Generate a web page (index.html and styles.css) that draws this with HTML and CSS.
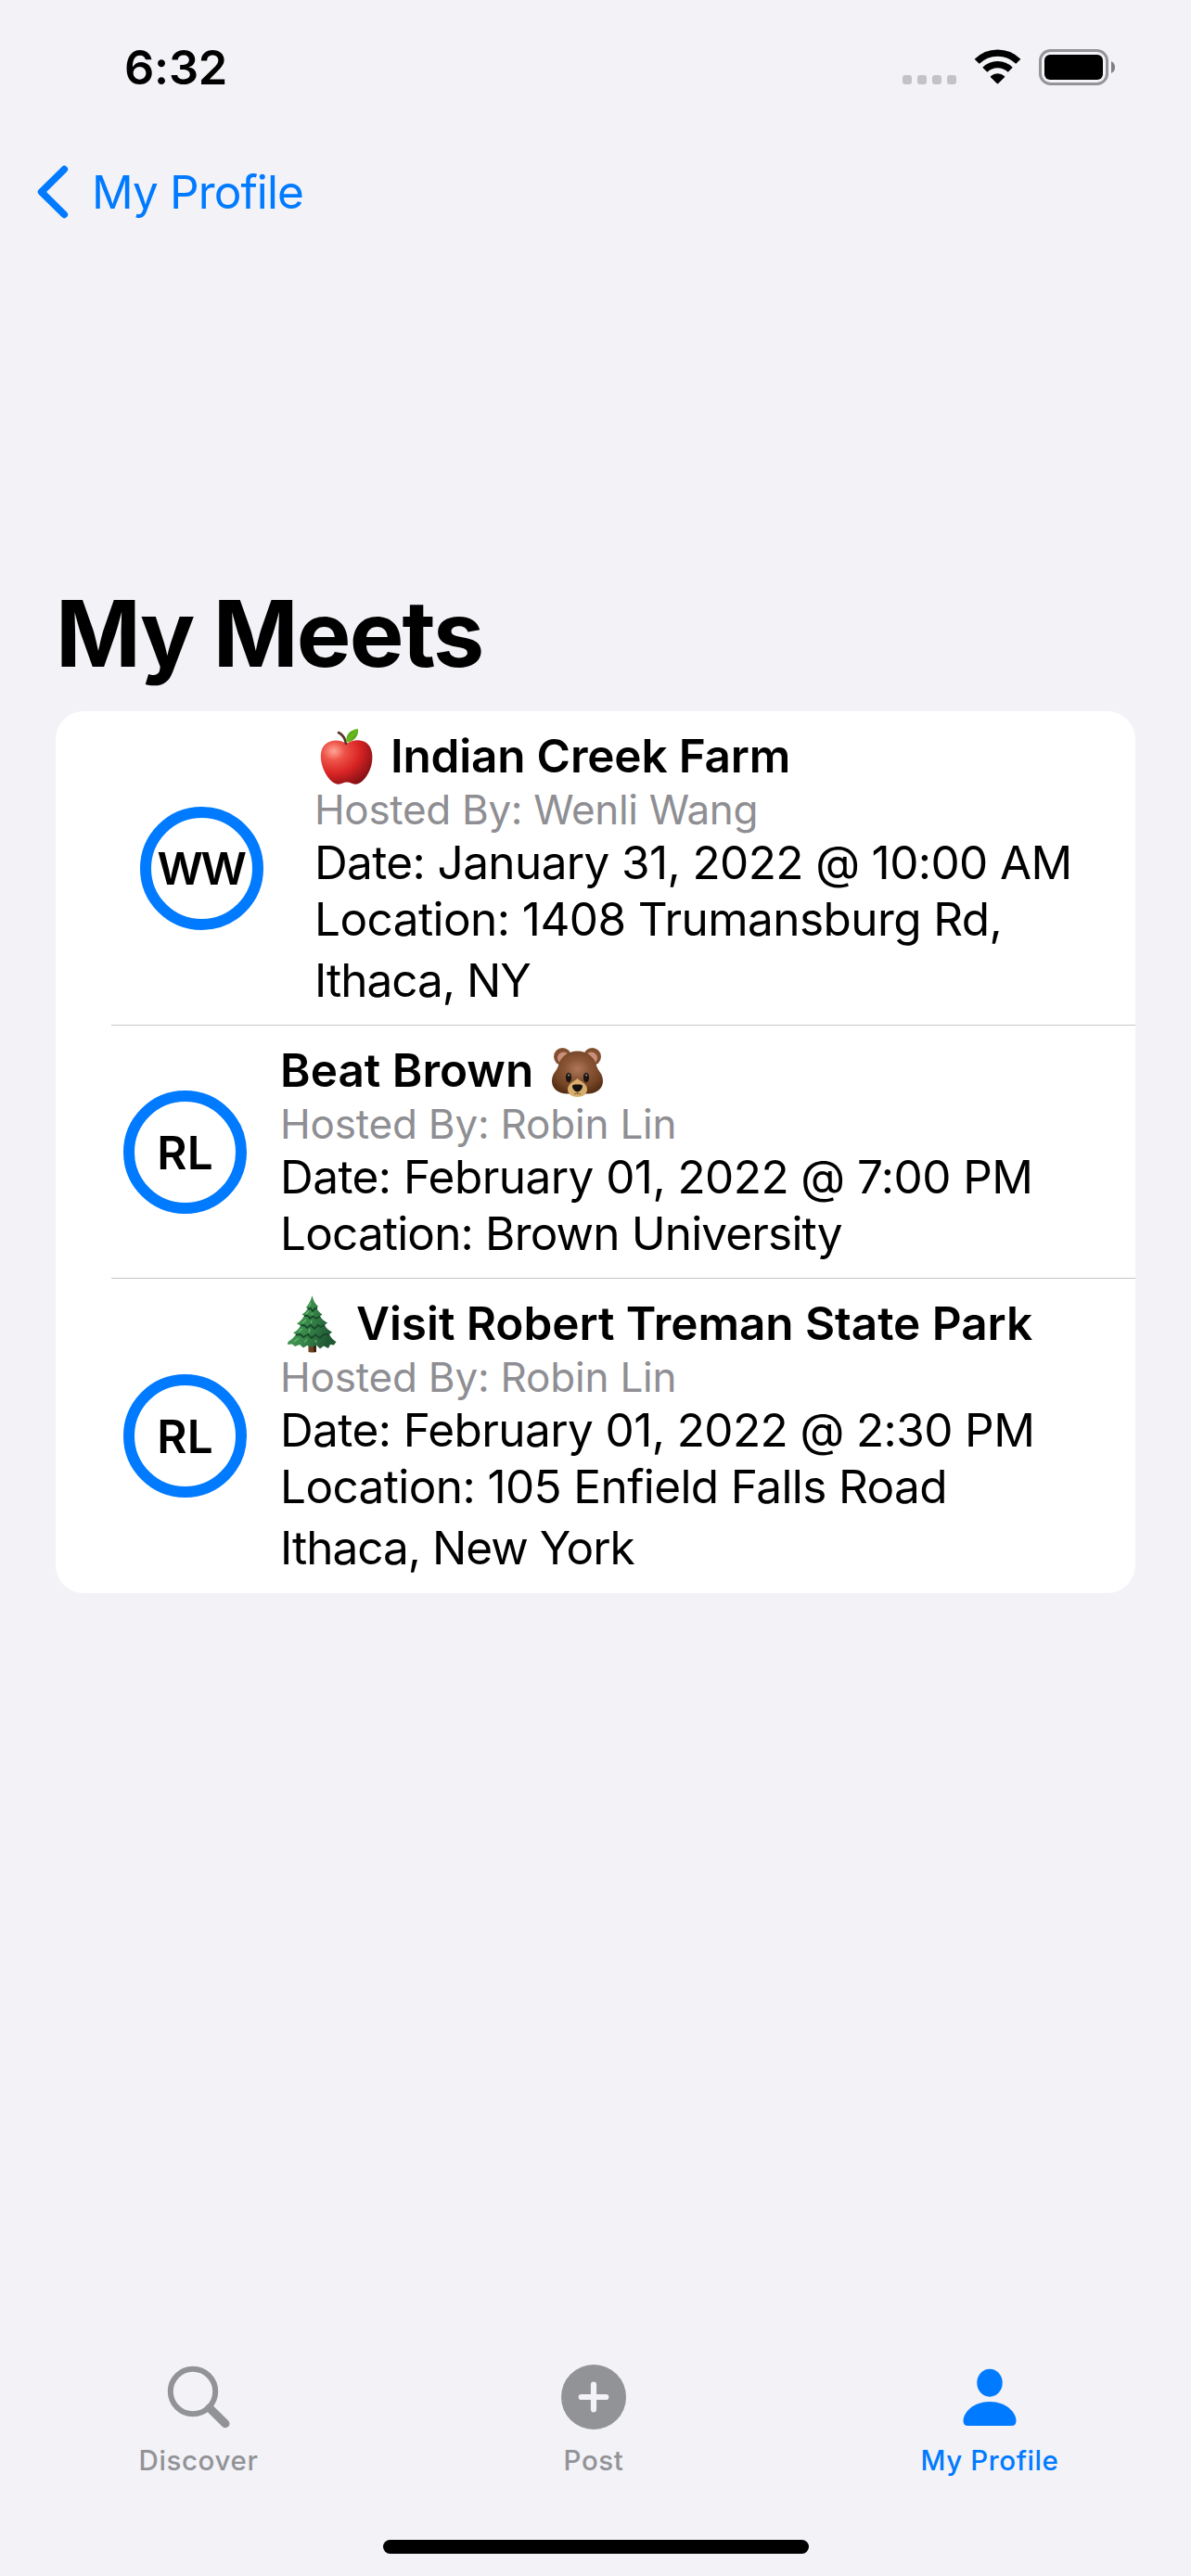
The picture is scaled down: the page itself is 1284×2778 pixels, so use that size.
FILE: index.html
```html
<!DOCTYPE html>
<html lang="en">
<head>
<meta charset="utf-8">
<title>My Meets</title>
<link rel="stylesheet" href="styles.css">
</head>
<body>
<header class="status">
  <span class="clock">6:32</span>
  <div class="status-icons">
    <span class="dots"><i></i><i></i><i></i><i></i></span>
    <svg class="wifi" width="51" height="38" viewBox="0 0 51 38" fill="none" stroke="#000">
      <path d="M3.2 13.3 A31.5 31.5 0 0 1 47.8 13.3" stroke-width="7.2"/>
      <path d="M11.8 22.2 A19.4 19.4 0 0 1 39.2 22.2" stroke-width="7.2"/>
      <path d="M18.2 30.6 Q17.4 29.8 18.2 29 A11 11 0 0 1 32.8 29 Q33.6 29.8 32.8 30.6 L26.2 37 Q25.5 37.6 24.8 37 Z" fill="#000" stroke="none"/>
    </svg>
    <svg class="battery" width="83" height="39" viewBox="0 0 83 39">
      <rect x="1.5" y="1.5" width="72" height="36" rx="11" fill="none" stroke="#949497" stroke-width="3"/>
      <rect x="6" y="6" width="63" height="27" rx="6" fill="#000"/>
      <path d="M78 13 Q82 15 82 19.5 Q82 24 78 26 Z" fill="#7f7f82"/>
    </svg>
  </div>
</header>

<nav class="nav">
  <svg width="34" height="58" viewBox="0 0 34 58" fill="none" stroke="#007aff" stroke-width="7.6" stroke-linecap="round" stroke-linejoin="round"><path d="M29.3 4.6 L4.6 29 L29.3 53.4"/></svg>
  <span class="back">My Profile</span>
</nav>

<main>
  <h1>My Meets</h1>
  <section class="list">
    <article class="meet first">
      <div class="avatar ww">WW</div>
      <div class="info">
        <h2 class="farm">
          <svg class="emoji" width="68" height="61" viewBox="0 0 68 61">
            <defs>
              <radialGradient id="apple" cx=".25" cy=".25" r=".85"><stop offset="0" stop-color="#ffa697"/><stop offset=".25" stop-color="#ee5348"/><stop offset=".6" stop-color="#d92425"/><stop offset="1" stop-color="#841014"/></radialGradient>
              <linearGradient id="leaf" x1="0" y1="0" x2="1" y2="1"><stop offset="0" stop-color="#3c8b14"/><stop offset=".5" stop-color="#68bb1c"/><stop offset="1" stop-color="#328011"/></linearGradient>
            </defs>
            <path d="M34 17 C27 12 18 13 12.500 17 C7 21 6 29 7.500 37 C9.500 48 17 59 24 60.500 C29 61.500 31 58.500 35 58.500 C39 58.500 41 61.500 46 60.500 C53 59 60.500 48 62 37 C63.500 27 61 20 56 16 C49 11.500 41 13 34 17 Z" fill="url(#apple)"/>
            <path d="M34 17 C33 11 30 7 26 5" fill="none" stroke="#593125" stroke-width="2.600" stroke-linecap="round"/>
            <path d="M34.500 15.500 C33 8 38 2 47 1 C48 8 43 15 34.500 15.500 Z" fill="url(#leaf)"/>
          </svg>
          <span>Indian Creek Farm</span>
        </h2>
        <p class="host wenli">Hosted By: Wenli Wang</p>
        <p class="line date1">Date: January 31, 2022 @ 10:00 AM</p>
        <p class="line loc1">Location: 1408 Trumansburg Rd,</p>
        <p class="line wrap">Ithaca, NY</p>
      </div>
    </article>
    <article class="meet">
      <div class="avatar">RL</div>
      <div class="info">
        <h2>
          <span>Beat Brown</span>
          <svg class="emoji bear" width="68" height="61" viewBox="0 0 68 61">
            <defs><radialGradient id="bear" cx=".5" cy=".42" r=".6"><stop offset="0" stop-color="#b0775a"/><stop offset=".4" stop-color="#8a5637"/><stop offset=".75" stop-color="#754526"/><stop offset="1" stop-color="#573015"/></radialGradient></defs>
            <circle cx="18.500" cy="15.500" r="9.500" fill="#82502f"/><circle cx="50.500" cy="15.500" r="9.500" fill="#82502f"/>
            <circle cx="19.500" cy="17" r="6.500" fill="#c98f7b"/><circle cx="49.500" cy="17" r="6.500" fill="#c98f7b"/>
            <path d="M34.500 9.500 C24 9.500 16 16 14 25 C12.500 31 7 33 7 42 C7 50 14 55.500 23 55.500 H46 C55 55.500 62 50 62 42 C62 33 56.500 31 55 25 C53 16 45 9.500 34.500 9.500 Z" fill="url(#bear)"/>
            <path d="M34.500 39 C32 42 24 44 24 51 C24 56 29 59 34.500 59 C40 59 45 56 45 51 C45 44 37 42 34.500 39 Z" fill="#d9ad6c"/>
            <path d="M34.500 45.500 C37 45.500 40 45.500 40 47.500 C40 50 37 53.500 34.500 53.500 C32 53.500 29 50 29 47.500 C29 45.500 32 45.500 34.500 45.500 Z" fill="#151010"/>
            <path d="M34.500 53 V56 M31 56 Q34.500 53.500 38 56" fill="none" stroke="#8a6235" stroke-width="1"/>
            <ellipse cx="25" cy="38" rx="3.100" ry="5.200" fill="#1b1612"/><ellipse cx="44" cy="38" rx="3.100" ry="5.200" fill="#1b1612"/>
            <circle cx="25.200" cy="35.500" r="1.100" fill="#9b9792"/><circle cx="44.200" cy="35.500" r="1.100" fill="#9b9792"/>
          </svg>
        </h2>
        <p class="host">Hosted By: Robin Lin</p>
        <p class="line date2">Date: February 01, 2022 @ 7:00 PM</p>
        <p class="line loc2">Location: Brown University</p>
      </div>
    </article>
    <article class="meet">
      <div class="avatar">RL</div>
      <div class="info">
        <h2>
          <svg class="emoji" width="68" height="61" viewBox="0 0 68 61">
            <defs><linearGradient id="tree" x1="0" y1="0" x2="1" y2=".35"><stop offset="0" stop-color="#4aa05a"/><stop offset=".5" stop-color="#3b8c4c"/><stop offset="1" stop-color="#1f5834"/></linearGradient></defs>
            <path d="M30.500 50 H39 V61 Q35 62 30.500 61 Z" fill="#6d4022"/><path d="M36 50 H39 V61 H36 Z" fill="#3d2010"/>
            <path d="M34.500 0 C36 6 38 9 41 12 L39.500 14 C41 17 43 19 45.500 20.500 L43 22.500 C45 26 48 28 51 29.500 L48 32 C50 36 53 38 56 39.500 L53 42 C55 46 58 48.500 60.500 50 L58 53.500 L54 53 L52 57 L47 54.500 L43 57.500 L39 53.500 L34 56 L29 54 L25 56.500 L21 53 L16 55 L13 52.500 L8 53 L8.500 50 C12 48 15 45 17 42 L14 40.500 C18 38 20 36 22 32.500 L18 30.500 C22 28 24 25 26 22 L23.500 20.500 C26 19 28 17 29.500 14.500 L28 13 C31 9 33 6 34.500 0 Z" fill="url(#tree)"/>
            <g fill="none" stroke="#184a2b" stroke-width="1.800" stroke-linejoin="round"><path d="M30 14.500 L33 14 L35 17 L38 14 L40 14"/><path d="M26 22 L30 22 L32 25 L35 22.500 L39 25 L43 22.500"/><path d="M22 32.500 L26 32 L29 35 L33 32 L37 36 L41 32 L44 34 L48 32"/><path d="M17 42.500 L22 42 L25 45 L30 42 L34 46 L38 42.500 L43 46 L47 42 L53 42"/></g>
            <g fill="none" stroke="#67b96e" stroke-width="1.200"><path d="M33 8 L31 12 M31 17 L28 20 M35 19 L34 21 M28 26 L24 30 M34 27 L33 30 M24 36 L20 39 M32 36 L31 40 M20 46 L15 50 M29 47 L26 51 M38 48 L39 51"/></g>
          </svg>
          <span class="visit">Visit Robert Treman State Park</span>
        </h2>
        <p class="host">Hosted By: Robin Lin</p>
        <p class="line date3">Date: February 01, 2022 @ 2:30 PM</p>
        <p class="line loc3">Location: 105 Enfield Falls Road</p>
        <p class="line wrap">Ithaca, New York</p>
      </div>
    </article>
  </section>
</main>

<footer class="tabs">
  <div class="tab">
    <svg width="72" height="72" viewBox="0 0 72 72" fill="none" stroke="#929397"><circle cx="30" cy="30" r="24.200" stroke-width="6"/><path d="M48 48 L65 64.700" stroke-width="9" stroke-linecap="round"/></svg>
    <span>Discover</span>
  </div>
  <div class="tab">
    <svg width="72" height="72" viewBox="0 0 72 72"><circle cx="36" cy="36" r="35" fill="#929397"/><path d="M36 22.700 V49.300 M22.700 36 H49.300" stroke="#f2f2f7" stroke-width="6.200" stroke-linecap="round"/></svg>
    <span>Post</span>
  </div>
  <div class="tab active">
    <svg width="72" height="72" viewBox="0 0 72 72" fill="#007aff"><ellipse cx="36" cy="20.700" rx="13.700" ry="15"/><path d="M7.500 61.500 C7.500 53 18 41 36 41 C54 41 64.500 53 64.500 61.500 Q64.500 67 59.500 67 H12.500 Q7.500 67 7.500 61.500 Z"/></svg>
    <span>My Profile</span>
  </div>
</footer>
<div class="home"></div>
</body>
</html>
```
FILE: styles.css
```css
* { box-sizing: border-box; }

body {
  margin: 0;
  width: 1284px;
  height: 2778px;
  background: #f2f2f7;
  color: #000;
  font-family: Inter, "Liberation Sans", sans-serif;
  display: flex;
  flex-direction: column;
  overflow: hidden;
}

h1, h2, p { margin: 0; }
svg { display: block; flex: none; }

/* Status bar */
.status {
  height: 141px;
  padding: 0 82px 0 134px;
  display: flex;
  justify-content: space-between;
}
.clock {
  font-size: 50.5px;
  font-weight: 600;
  line-height: 60px;
  letter-spacing: -0.25px;
  padding-top: 43px;
}
.status-icons { display: flex; padding-top: 53px; }
.dots { display: flex; gap: 6px; padding-top: 28px; margin-right: 19px; }
.dots i { width: 10px; height: 10px; border-radius: 3px; background: #c3c2c7; }
.wifi { margin-right: 19px; }
.battery { margin-right: -1px; }

/* Navigation bar */
.nav {
  height: 132px;
  padding-left: 40px;
  display: flex;
  align-items: center;
}
.back {
  margin-left: 25px;
  font-size: 49.5px;
  line-height: 60px;
  letter-spacing: -0.9px;
  color: #007aff;
}

main { flex: 1; padding: 350px 60px 0; }
h1 {
  font-size: 98.6px;
  font-weight: 700;
  line-height: 120px;
  letter-spacing: -1.9px;
  height: 144px;
}

/* Grouped list */
.list { background: #fff; border-radius: 30px; height: 951px; }
.meet {
  display: flex;
  align-items: center;
  padding: 18px 0 18px 13px;
  margin-left: 60px;
}
.meet + .meet { background: linear-gradient(#c6c6c8, #c6c6c8) 0 0 / 100% 1px no-repeat; }
.meet + .meet { margin-top: -1px; padding-top: 19px; }
.first { padding-left: 31px; }
.avatar {
  flex: none;
  width: 133px;
  height: 133px;
  margin-right: 36px;
  border: 12px solid #007aff;
  border-radius: 50%;
  display: flex;
  align-items: center;
  justify-content: center;
  font-size: 49.5px;
  font-weight: 600;
}
.first .avatar { margin-right: 55px; }
.ww { font-size: 48.5px; letter-spacing: -3.5px; padding-right: 3px; }
.info { flex: 1; white-space: nowrap; }
h2 {
  display: flex;
  font-size: 49.5px;
  font-weight: 600;
  line-height: 61px;
}
.emoji { margin-right: 14px; overflow: visible; }
.bear { margin: 0 0 0 13px; }
.farm { letter-spacing: -0.2px; }
.visit { letter-spacing: -0.05px; }
.host {
  font-size: 44px;
  line-height: 54px;
  letter-spacing: -0.2px;
  color: #8e8e93;
}
.wenli { letter-spacing: -0.33px; }
.line { font-size: 49.5px; line-height: 61px; }
.wrap { padding-top: 5px; letter-spacing: -1px; }
.date1 { letter-spacing: -0.62px; }
.loc1 { letter-spacing: -0.57px; }
.date2 { letter-spacing: -0.56px; }
.loc2 { letter-spacing: -0.84px; }
.date3 { letter-spacing: -0.6px; }
.loc3 { letter-spacing: -0.61px; }

/* Tab bar */
.tabs {
  height: 190px;
  display: grid;
  grid-template-columns: 428px 424px 430px;
}
.tab {
  display: flex;
  flex-direction: column;
  align-items: center;
  color: #929397;
  font-size: 29.5px;
  font-weight: 500;
  line-height: 36px;
  letter-spacing: 0.6px;
}
.tab span { margin-top: 14px; }
.active { color: #007aff; }

.home {
  width: 459px;
  height: 15px;
  border-radius: 8px;
  background: #000;
  margin: 0 auto 24px;
}
```
